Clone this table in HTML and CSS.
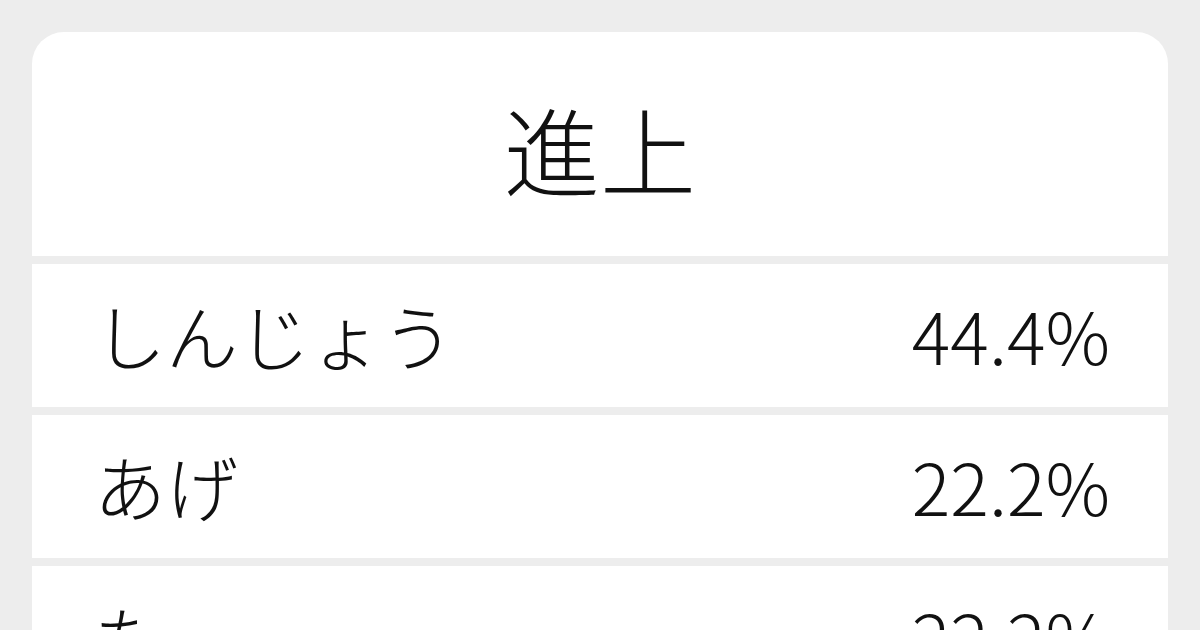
FILE: index.html
```html
<!DOCTYPE html>
<html lang="ja">
<head>
<meta charset="utf-8">
<link rel="stylesheet" href="styles.css">
</head>
<body>
<div class="card">
  <div class="title">進上</div>
  <div class="row"><span class="label">しんじょう</span><span class="pct">44.4%</span></div>
  <div class="row"><span class="label">あげ</span><span class="pct">22.2%</span></div>
  <div class="row"><span class="label">た</span><span class="pct">22.2%</span></div>
</div>
</body>
</html>
```

FILE: styles.css
```css
html, body {
  margin: 0;
  padding: 0;
  background: #ededed;
  width: 1200px;
  height: 630px;
  overflow: hidden;
}
body {
  padding: 32px 32px 0;
  box-sizing: border-box;
  font-family: "Noto Sans CJK JP", "Noto Sans", sans-serif;
  font-weight: 300;
  color: #111;
}
.card {
  display: flex;
  flex-direction: column;
  gap: 8px;
  border-radius: 32px 32px 0 0;
  overflow: hidden;
}
.title {
  background: #fff;
  height: 224px;
  display: flex;
  align-items: center;
  justify-content: center;
  font-size: 96px;
  line-height: 1;
  padding-top: 8px;
  box-sizing: border-box;
}
.row {
  background: #fff;
  height: 143px;
  display: flex;
  align-items: center;
  justify-content: space-between;
  padding: 0 58px 4px 62px;
  box-sizing: border-box;
  font-size: 72px;
  line-height: 1;
}
```
